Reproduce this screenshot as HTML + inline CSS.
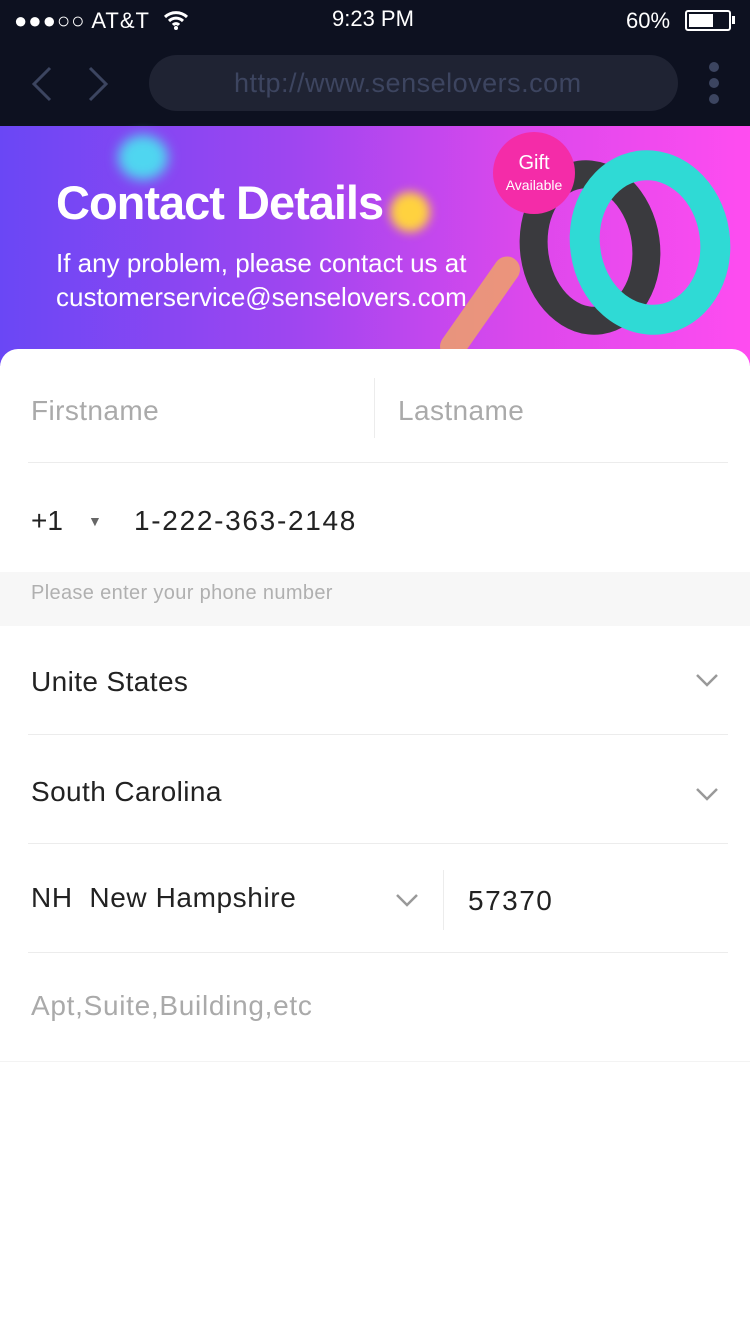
<!DOCTYPE html>
<html><head><meta charset="utf-8"><style>
*{margin:0;padding:0;box-sizing:border-box}
body{width:750px;height:1334px;background:#fff;font-family:"Liberation Sans",sans-serif;position:relative;overflow:hidden}
.abs{position:absolute}
.top{left:0;top:0;width:750px;height:126px;background:#0d1120}
.banner{left:0;top:126px;width:750px;height:240px;background:linear-gradient(90deg,#6a47f5 0%,#a046f0 40%,#dc48ec 70%,#ff4cf0 100%)}
.card{left:0;top:349px;width:750px;height:985px;background:#fff;border-radius:18px 18px 0 0}
.t{position:absolute;white-space:nowrap}
.f{letter-spacing:0.4px}
.line{position:absolute;height:1px;background:#ececec}
</style></head><body>
<div class="abs top"></div>
<div class="t" style="left:14px;top:8px;color:#fff;font-size:22px;letter-spacing:1px">●●●○○ AT&amp;T</div>
<svg class="abs" style="left:163px;top:10px" width="26" height="20" viewBox="0 0 26 20"><path d="M2 7a16 16 0 0 1 22 0M6 11a10 10 0 0 1 14 0M10 15a4 4 0 0 1 6 0" stroke="#fff" stroke-width="3" fill="none"/><circle cx="13" cy="18" r="2" fill="#fff"/></svg>
<div class="t" style="left:332px;top:6px;color:#fff;font-size:22px">9:23 PM</div>
<div class="t" style="left:626px;top:8px;color:#fff;font-size:22px">60%</div>
<div class="abs" style="left:685px;top:10px;width:46px;height:21px;border:2px solid #fff;border-radius:3px"><div style="margin:2px;width:24px;height:13px;background:#fff"></div></div>
<div class="abs" style="left:732px;top:16px;width:3px;height:8px;background:#fff"></div>
<svg class="abs" style="left:28px;top:64px" width="84" height="40"><path d="M22 4L6 20l16 16M62 4l16 16-16 16" stroke="#3c4560" stroke-width="3" fill="none"/></svg>
<div class="abs" style="left:149px;top:55px;width:529px;height:56px;border-radius:28px;background:#1f2333"></div>
<div class="t" style="left:234px;top:68px;color:#3d4560;font-size:27px;letter-spacing:0.5px">http://www.senselovers.com</div>
<div class="abs" style="left:709px;top:62px;width:10px;height:10px;border-radius:5px;background:#3c4560"></div>
<div class="abs" style="left:709px;top:78px;width:10px;height:10px;border-radius:5px;background:#3c4560"></div>
<div class="abs" style="left:709px;top:94px;width:10px;height:10px;border-radius:5px;background:#3c4560"></div>
<div class="abs banner"></div>
<div class="abs" style="left:118px;top:135px;width:50px;height:45px;border-radius:50%;background:#4fd6f0;filter:blur(6px)"></div>
<div class="abs" style="left:390px;top:192px;width:40px;height:40px;border-radius:50%;background:#ffd23f;filter:blur(5px)"></div>
<div class="abs" style="left:420px;top:295px;width:120px;height:26px;border-radius:13px;background:#f0a860;transform:rotate(-55deg);opacity:.8"></div>
<div class="t" style="left:56px;top:175px;color:#fff;font-size:47px;font-weight:bold;letter-spacing:-1px">Contact Details</div>
<div class="t" style="left:56px;top:248px;color:#fff;font-size:26px;letter-spacing:0px">If any problem, please contact us at</div>
<div class="t" style="left:56px;top:282px;color:#fff;font-size:26px;letter-spacing:0px">customerservice@senselovers.com</div>
<div class="abs" style="left:520px;top:160px;width:140px;height:175px;border-radius:70px/88px;border:28px solid #3a3a3e;transform:rotate(-8deg)"></div>
<div class="abs" style="left:570px;top:150px;width:160px;height:185px;border-radius:80px/92px;border:30px solid #2fdad5;transform:rotate(-8deg)"></div>
<div class="abs" style="left:493px;top:132px;width:82px;height:82px;border-radius:50%;background:#f42ca8"></div>
<div class="t" style="left:493px;top:152px;width:82px;text-align:center;color:#fff;font-size:20px">Gift</div>
<div class="t" style="left:493px;top:177px;width:82px;text-align:center;color:#fff;font-size:14px">Available</div>
<div class="abs card"></div>
<div class="t f" style="left:31px;top:395px;color:#aaa;font-size:28px">Firstname</div>
<div class="abs" style="left:374px;top:378px;width:1px;height:60px;background:#ececec"></div>
<div class="t f" style="left:398px;top:395px;color:#aaa;font-size:28px">Lastname</div>
<div class="line" style="left:28px;top:462px;width:700px"></div>
<div class="t" style="left:31px;top:505px;color:#222;font-size:28px">+1</div>
<div class="t" style="left:88px;top:513px;color:#666;font-size:14px">▼</div>
<div class="t" style="left:134px;top:505px;color:#222;font-size:28px;letter-spacing:1.7px">1-222-363-2148</div>
<div class="abs" style="left:0;top:572px;width:750px;height:54px;background:#f7f7f7"></div>
<div class="t" style="left:31px;top:582px;color:#b0b0b0;font-size:20px;letter-spacing:0.35px">Please enter your phone number</div>
<div class="t f" style="left:31px;top:666px;color:#222;font-size:28px">Unite States</div>
<svg class="abs" style="left:695px;top:672px" width="24" height="16"><path d="M2 3l10 10 10-10" stroke="#999" stroke-width="2.5" fill="none"/></svg>
<div class="line" style="left:28px;top:734px;width:700px"></div>
<div class="t f" style="left:31px;top:776px;color:#222;font-size:28px">South Carolina</div>
<svg class="abs" style="left:695px;top:786px" width="24" height="16"><path d="M2 3l10 10 10-10" stroke="#999" stroke-width="2.5" fill="none"/></svg>
<div class="line" style="left:28px;top:843px;width:700px"></div>
<div class="t f" style="left:31px;top:882px;color:#222;font-size:28px;letter-spacing:0.6px">NH&nbsp; New Hampshire</div>
<svg class="abs" style="left:395px;top:892px" width="24" height="16"><path d="M2 3l10 10 10-10" stroke="#999" stroke-width="2.5" fill="none"/></svg>
<div class="abs" style="left:443px;top:870px;width:1px;height:60px;background:#ececec"></div>
<div class="t" style="left:468px;top:885px;color:#222;font-size:28px;letter-spacing:1.5px">57370</div>
<div class="line" style="left:28px;top:952px;width:700px"></div>
<div class="t" style="left:31px;top:990px;color:#aaa;font-size:28px;letter-spacing:0.7px">Apt,Suite,Building,etc</div>
<div class="line" style="left:0;top:1061px;width:750px;background:#f3f3f3"></div>
</body></html>
